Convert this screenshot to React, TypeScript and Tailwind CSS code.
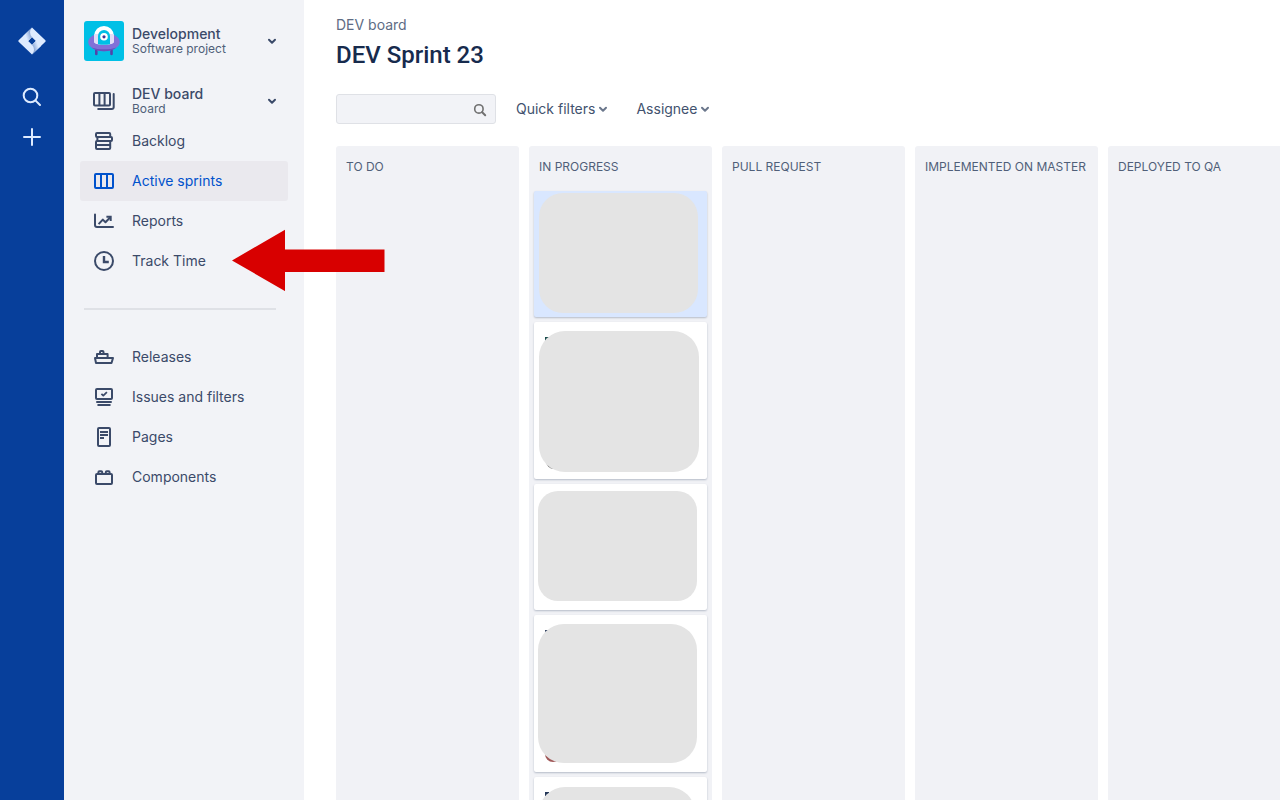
import type { ReactNode } from "react";

function Icon({ children }: { children: ReactNode }) {
  return (
    <svg
      viewBox="0 0 24 24"
      className="size-6 shrink-0"
      fill="none"
      stroke="currentColor"
      strokeWidth="2"
      strokeLinejoin="round"
      aria-hidden="true"
    >
      {children}
    </svg>
  );
}

const icons = {
  board: (
    <Icon>
      <rect x="2" y="4" width="16" height="12.6" rx="1" />
      <path d="M7.4 4v12.6M12.6 4v12.6" />
      <path d="M21.7 5v13.2a1.8 1.8 0 0 1-1.8 1.8H6.2" strokeLinecap="round" />
    </Icon>
  ),
  backlog: (
    <Icon>
      <rect x="4" y="4" width="14.2" height="4" rx="1" />
      <rect x="5.4" y="8" width="14.600" height="4" rx="1" />
      <rect x="4" y="12" width="14.2" height="8" rx="1" />
      <path d="M4 16h14.2" />
    </Icon>
  ),
  sprints: (
    <Icon>
      <rect x="3" y="5" width="18" height="14" rx="1" />
      <path d="M9 5v14M15 5v14" />
    </Icon>
  ),
  reports: (
    <Icon>
      <path d="M3 5.5V16a2 2 0 0 0 2 2h16" strokeLinecap="round" />
      <path d="M6.6 15.2l4.2-4.600 2.700 2.600L18.300 8.300" />
      <path d="M14.400 7.800h4.300V12" strokeLinejoin="miter" />
    </Icon>
  ),
  clock: (
    <Icon>
      <circle cx="12" cy="12" r="9" />
      <path d="M12 7v6h4.8" strokeLinejoin="miter" strokeWidth="2.4" />
    </Icon>
  ),
  releases: (
    <Icon>
      <path d="M3 13h18l-1.5 5H4z" />
      <path d="M5 13V9h10.600v4" />
      <path d="M8 9V7c0-.600.400-1 1-1h1.500c.600 0 1 .400 1 1v2" />
    </Icon>
  ),
  issues: (
    <Icon>
      <rect x="4" y="4" width="16" height="10" rx="1" />
      <path d="M9.4 8.8l1.9 1.8 3.6-3.4" strokeWidth="1.8" />
      <path d="M5 17h14M6.200 20h11.600" strokeLinecap="round" />
    </Icon>
  ),
  pages: (
    <Icon>
      <rect x="6" y="3" width="12" height="18" rx="1" />
      <path d="M8 7h8M8 10h8M8 13h4" strokeWidth="1.8" />
    </Icon>
  ),
  components: (
    <Icon>
      <rect x="4" y="9" width="16" height="10" rx="1" />
      <path d="M6.4 9V7.2c0-.6.4-1 1-1h1.8c.6 0 1 .4 1 1V9M13.800 9V7.2c0-.6.4-1 1-1h1.8c.6 0 1 .4 1 1V9" />
    </Icon>
  ),
};

function Chevron({ className }: { className: string }) {
  return (
    <svg viewBox="0 0 10 10" className={className} fill="none" stroke="currentColor" strokeWidth="2" strokeLinecap="round" strokeLinejoin="round" aria-hidden="true">
      <path d="M2 3.8l3 3 3-3" />
    </svg>
  );
}

function Rail() {
  return (
    <nav aria-label="Global" className="flex w-16 shrink-0 flex-col items-center bg-[#073f9b] pt-[21px] text-[#deebff]">
      <a href="#home" aria-label="Jira home" className="flex size-10 items-center justify-center">
        <svg viewBox="0 0 28 28" className="size-7" aria-hidden="true">
          <defs>
            <linearGradient id="upper" x1="14" y1="8" x2="8" y2="10" gradientUnits="userSpaceOnUse">
              <stop offset="0" stopColor="#7f9dd0" />
              <stop offset="1" stopColor="#deebff" />
            </linearGradient>
            <linearGradient id="lower" x1="14" y1="20" x2="20" y2="18" gradientUnits="userSpaceOnUse">
              <stop offset="0" stopColor="#7f9dd0" />
              <stop offset="1" stopColor="#deebff" />
            </linearGradient>
          </defs>
          <path d="M14 .5L27.1 13a1.3 1.3 0 0 1 0 2L14 27.6.9 15a1.3 1.3 0 0 1 0-2zM14 10.2L10.2 14l3.800 3.800 3.800-3.800z" fill="#deebff" fillRule="evenodd" />
          <path d="M14 .5a7 7 0 0 0 0 9.700L10.200 14 4.700 9.400z" fill="url(#upper)" />
          <path d="M14 27.6a7 7 0 0 0 0-9.800l3.800-3.800 5.500 4.700z" fill="url(#lower)" />
        </svg>
      </a>
      <button type="button" aria-label="Search" className="mt-4 flex size-10 items-center justify-center">
        <svg viewBox="0 0 20 20" className="size-5" fill="none" stroke="currentColor" strokeWidth="2" strokeLinecap="round" aria-hidden="true">
          <circle cx="8.5" cy="8.5" r="6.800" />
          <path d="M13.600 13.600l4.400 4.400" />
        </svg>
      </button>
      <button type="button" aria-label="Create" className="flex size-10 items-center justify-center">
        <svg viewBox="0 0 20 20" className="size-5" fill="none" stroke="currentColor" strokeWidth="2" strokeLinecap="round" aria-hidden="true">
          <path d="M10 2v16M2 10h16" />
        </svg>
      </button>
    </nav>
  );
}

function ProjectAvatar() {
  return (
    <svg viewBox="0 0 40 40" className="size-10 shrink-0 rounded-[3px]" aria-hidden="true">
      <rect width="40" height="40" fill="#00c0e6" />
      <path d="M11 28h2.600v5a1.300 1.300 0 0 1-2.600 0zM26.200 28h2.600v5a1.300 1.300 0 0 1-2.600 0z" fill="#5243aa" />
      <ellipse cx="20" cy="21" rx="15.800" ry="9.200" fill="#8270d8" />
      <path d="M7.500 26.400c7 2.600 18 2.600 25 0-3.200 2.900-7.900 3.800-12.500 3.800s-9.300-.900-12.500-3.800z" fill="#6552bd" />
      <path d="M10.200 14.800a9.800 9.800 0 0 1 19.600 0v6c0 1.800-4.400 3-9.800 3s-9.800-1.200-9.800-3z" fill="#fff" />
      <path d="M10.200 13h19.600v7.800c0 1.800-4.400 3-9.800 3s-9.800-1.200-9.800-3z" fill="#e2ddf7" />
      <path d="M14 15a6 6 0 0 1 12 0v8.300c-3.700.700-8.300.700-12 0z" fill="#00c0e6" />
      <circle cx="20" cy="15.800" r="3.800" fill="#fff" />
      <circle cx="20" cy="15.800" r="1.600" fill="#403294" />
    </svg>
  );
}

function NavItem({ icon, label, active, children }: { icon: ReactNode; label: string; active?: boolean; children?: ReactNode }) {
  return (
    <li className="relative">
      <a
        href="#"
        aria-current={active ? "page" : undefined}
        className={
          active
            ? "flex h-10 items-center gap-4 rounded-[3px] bg-[#eae9ee] px-3 text-[#0052cc]"
            : "flex h-10 items-center gap-4 rounded-[3px] px-3"
        }
      >
        {icon}
        {label}
      </a>
      {children}
    </li>
  );
}

function Sidebar() {
  return (
    <aside className="relative z-10 w-60 shrink-0 bg-[#f2f3f7] px-4 pt-[21px] text-sm text-[#3b4a69]">
      <button type="button" className="flex h-10 w-full items-center gap-2 pr-[11px] pl-1 text-left">
        <ProjectAvatar />
        <span className="flex-1">
          <span className="block leading-4 font-medium">Development</span>
          <span className="block text-xs leading-[14px] text-[#505f79]">Software project</span>
        </span>
        <Chevron className="size-[10px]" />
      </button>
      <button type="button" className="mt-5 flex h-10 w-full items-center gap-4 pr-[11px] pl-3 text-left">
        {icons.board}
        <span className="flex-1">
          <span className="block leading-4 font-medium">DEV board</span>
          <span className="block text-xs leading-[14px] text-[#505f79]">Board</span>
        </span>
        <Chevron className="size-[10px]" />
      </button>
      <ul>
        <NavItem icon={icons.backlog} label="Backlog" />
        <NavItem icon={icons.sprints} label="Active sprints" active />
        <NavItem icon={icons.reports} label="Reports" />
        <NavItem icon={icons.clock} label="Track Time">
          <svg viewBox="0 0 153 62" className="pointer-events-none absolute -top-3 left-38 h-[62px] w-[153px] max-w-none" aria-hidden="true">
            <path d="M0 31.500L53 .700v19.900h99.500v22.500H53v19z" fill="#d80000" />
          </svg>
        </NavItem>
      </ul>
      <hr className="mt-[27px] mr-3 mb-[27px] ml-1 h-[2px] border-0 bg-[#dfe1e6]" />
      <ul>
        <NavItem icon={icons.releases} label="Releases" />
        <NavItem icon={icons.issues} label="Issues and filters" />
        <NavItem icon={icons.pages} label="Pages" />
        <NavItem icon={icons.components} label="Components" />
      </ul>
    </aside>
  );
}

function Column({ title, children }: { title: string; children?: ReactNode }) {
  return (
    <section className="w-[183px] shrink-0 rounded-t-[3px] bg-[#f1f2f6] px-[5px]">
      <h2 className="flex h-[45px] items-center px-[5px] pb-1 text-xs whitespace-nowrap text-[#505f79]">{title}</h2>
      <div className="flex flex-col gap-[5px]">{children}</div>
    </section>
  );
}

const cardClass = "relative rounded-[2px] shadow-[0_1px_2px_rgba(9,30,66,0.25)]";

function Board() {
  return (
    <div className="flex min-h-0 flex-1 gap-[10px] overflow-hidden">
      <Column title="TO DO" />
      <Column title="IN PROGRESS">
        <article className={`${cardClass} bg-[#d9e7ff] pt-[2px] pr-[9px] pb-1 pl-[5px]`}>
          <div className="h-[120px] rounded-[24px] bg-[#e4e4e4]" />
        </article>
        <article className={`${cardClass} bg-white pt-[9px] pr-2 pb-[7px] pl-[5px]`}>
          <span className="absolute top-[15px] left-[11px] size-1 bg-[#1b4d4d]" />
          <span className="absolute bottom-[10px] left-[12px] size-4 rounded-full bg-[#777777]" />
          <div className="relative h-[141px] rounded-[26px] bg-[#e4e4e4]" />
        </article>
        <article className={`${cardClass} bg-white pt-[7px] pr-[10px] pb-[9px] pl-1`}>
          <div className="h-[110px] rounded-[20px] bg-[#e4e4e4]" />
        </article>
        <article className={`${cardClass} bg-white pt-[9px] pr-[10px] pb-[9px] pl-1`}>
          <span className="absolute top-[15px] left-[11px] size-1 bg-[#344563]" />
          <span className="absolute bottom-[10px] left-[11px] size-4 rounded-full bg-[#a05858]" />
          <div className="relative h-[139px] rounded-[26px] bg-[#e4e4e4]" />
        </article>
        <article className={`${cardClass} bg-white pt-[10px] pr-3 pb-2 pl-[5px]`}>
          <span className="absolute top-[15px] left-[11px] size-1 bg-[#253858]" />
          <div className="relative h-[139px] rounded-[26px] bg-[#e4e4e4]" />
        </article>
      </Column>
      <Column title="PULL REQUEST" />
      <Column title="IMPLEMENTED ON MASTER" />
      <Column title="DEPLOYED TO QA" />
    </div>
  );
}

export default function App() {
  return (
    <div className="flex h-screen overflow-hidden bg-white font-['Inter','Liberation_Sans',sans-serif]">
      <Rail />
      <Sidebar />
      <main className="flex min-w-0 flex-1 flex-col pt-[15px] pl-8">
        <p className="text-sm leading-5 text-[#5e6c84]">DEV board</p>
        <h1 className="mt-[6px] font-['Roboto','Liberation_Sans',sans-serif] text-2xl leading-7 font-medium text-[#172b4d]">DEV Sprint 23</h1>
        <div className="mt-[25px] mb-[22px] flex h-[30px] items-center text-sm text-[#42526e]">
          <label className="relative mr-5 block w-40">
            <input
              type="text"
              aria-label="Search board"
              className="block h-[30px] w-full rounded-[3px] border border-[#dfe1e6] bg-[#f2f3f7] pr-8 pl-2 outline-none"
            />
            <svg viewBox="0 0 14 14" className="absolute top-[9px] right-[9px] size-[14px] text-[#707070]" fill="none" stroke="currentColor" strokeWidth="1.600" strokeLinecap="round" aria-hidden="true">
              <circle cx="5.900" cy="5.900" r="4.200" />
              <path d="M9.200 9.200l3 3" strokeWidth="2" />
            </svg>
          </label>
          <button type="button" className="mr-7 flex items-center gap-[3px]">
            Quick filters
            <Chevron className="size-[10px] text-[#6b778c]" />
          </button>
          <button type="button" className="flex items-center gap-[3px]">
            Assignee
            <Chevron className="size-[10px] text-[#6b778c]" />
          </button>
        </div>
        <Board />
      </main>
    </div>
  );
}
